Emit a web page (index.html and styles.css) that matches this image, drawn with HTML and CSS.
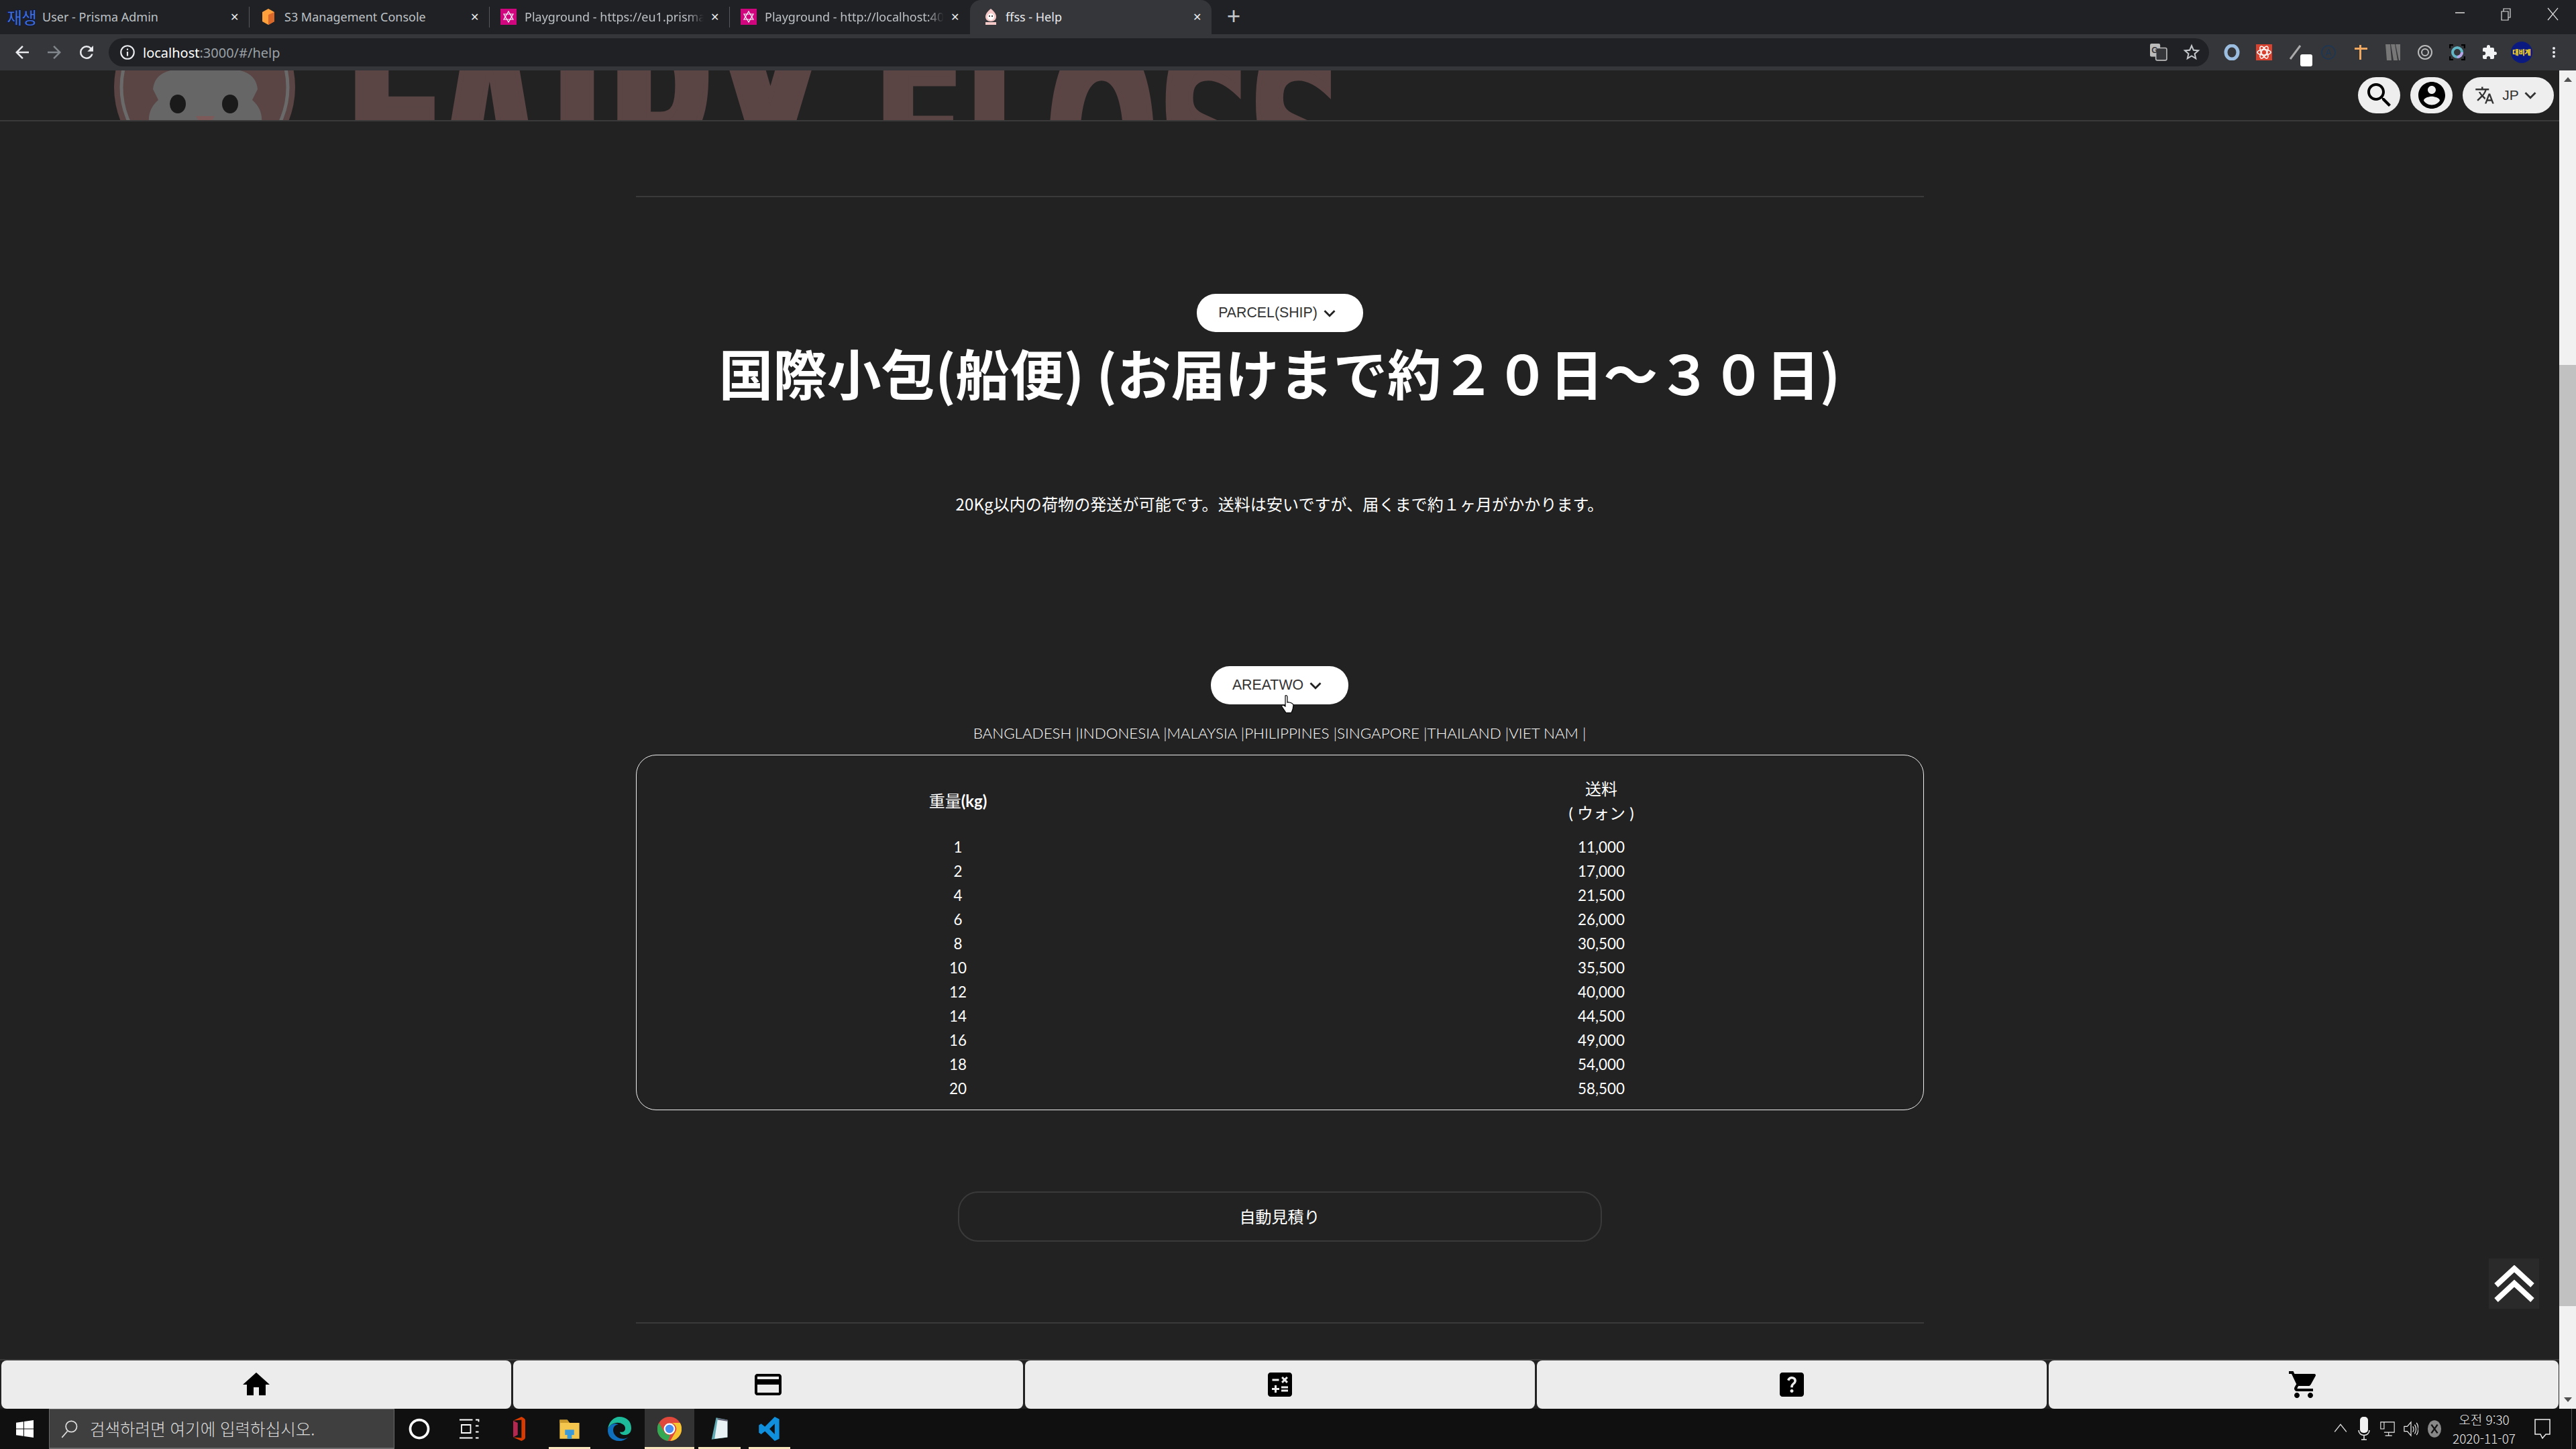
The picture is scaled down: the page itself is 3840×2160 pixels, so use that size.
FILE: index.html
```html
<!DOCTYPE html>
<html lang="ja">
<head>
    <meta charset="UTF-8">
    <title>ffss - Help</title>
    <link rel="stylesheet" href="styles.css">
</head>
<body>

    <!-- browser tabs -->
    <div class="tabbar">
        <div class="tab tab-first">
            <span class="fav-text" lang="ko">재생</span>
            <span class="tab-title">User - Prisma Admin</span>
            <span class="tab-x">✕</span>
        </div>
        <div class="tab">
            <svg class="fav" viewBox="0 0 24 24"><path fill="#ffa03c" d="M12 0 21 5v14l-9 5-9-5V5z"/><path fill="#d9672a" d="M12 9 21 5v14l-9 5z"/></svg>
            <span class="tab-title">S3 Management Console</span>
            <span class="tab-x">✕</span>
        </div>
        <div class="tab">
            <svg class="fav" viewBox="0 0 24 24"><rect width="24" height="24" fill="#d0067f"/><path fill="none" stroke="#fff" stroke-width="1.2" d="M12 4 19 16H5zM12 20 5 8h14z"/></svg>
            <span class="tab-title tab-fade">Playground - https://eu1.prisma</span>
            <span class="tab-x">✕</span>
        </div>
        <div class="tab">
            <svg class="fav" viewBox="0 0 24 24"><rect width="24" height="24" fill="#d0067f"/><path fill="none" stroke="#fff" stroke-width="1.2" d="M12 4 19 16H5zM12 20 5 8h14z"/></svg>
            <span class="tab-title tab-fade">Playground - http://localhost:40</span>
            <span class="tab-x">✕</span>
        </div>
        <div class="tab tab-active">
            <svg class="fav-small" viewBox="0 0 20 24"><path fill="#f6c9c9" d="M10 0c5 4 8 8 8 12s-3 7-8 7-8-3-8-7 3-8 8-12z"/><circle cx="10" cy="12" r="5" fill="#fff"/><circle cx="8" cy="11" r="1"/><circle cx="12" cy="11" r="1"/><rect x="2" y="20" width="16" height="4" fill="#f6c9c9"/></svg>
            <span class="tab-title">ffss - Help</span>
            <span class="tab-x">✕</span>
        </div>
        <span class="tab-new">+</span>
        <div class="win-btns">
            <svg viewBox="0 0 20 20"><path stroke="#ddd" stroke-width="1.5" d="M3 8h14"/></svg>
            <svg viewBox="0 0 20 20"><path fill="none" stroke="#ddd" stroke-width="1.2" d="M3 6h10v13H3zM6 6V2h10v13h-3"/></svg>
            <svg viewBox="0 0 20 20"><path stroke="#ddd" stroke-width="1.2" d="M3 1l15 18M18 1 3 19"/></svg>
        </div>
    </div>

    <!-- address bar -->
    <div class="toolbar">
        <svg class="nav-ico" viewBox="0 0 24 24"><path fill="#e8eaed" d="M20 11H7.83l5.59-5.59L12 4l-8 8 8 8 1.41-1.41L7.83 13H20z"/></svg>
        <svg class="nav-ico" viewBox="0 0 24 24"><path fill="#80868b" d="M4 11h12.17l-5.59-5.59L12 4l8 8-8 8-1.41-1.41L16.17 13H4z"/></svg>
        <svg class="nav-ico" viewBox="0 0 24 24"><path fill="#e8eaed" d="M17.65 6.35A7.96 7.96 0 0 0 12 4a8 8 0 1 0 7.73 10h-2.08A6 6 0 1 1 12 6c1.66 0 3.14.69 4.22 1.78L13 11h7V4z"/></svg>
        <div class="omnibox">
            <svg class="info-ico" viewBox="0 0 24 24"><path fill="#e8eaed" d="M11 7h2v2h-2zm0 4h2v6h-2zm1-9a10 10 0 1 0 0 20 10 10 0 0 0 0-20zm0 18a8 8 0 1 1 0-16 8 8 0 0 1 0 16z"/></svg>
            <span class="url"><b>localhost</b>:3000/#/help</span>
            <svg class="omni-right" viewBox="0 0 24 24"><rect width="14" height="18" rx="2" fill="#bbb"/><rect x="8" y="6" width="15" height="17" rx="2" fill="#35363a" stroke="#bbb" stroke-width="1.5"/><text x="2" y="13" font-family="Liberation Sans" font-size="11" font-weight="700" fill="#35363a">G</text></svg>
            <svg class="omni-star" viewBox="0 0 24 24"><path fill="#c4c7cb" d="M22 9.24l-7.19-.62L12 2 9.19 8.63 2 9.24l5.46 4.73L5.82 21 12 17.27 18.18 21l-1.63-7.03zM12 15.4l-3.76 2.27 1-4.28-3.32-2.88 4.38-.38L12 6.1l1.71 4.04 4.38.38-3.32 2.88 1 4.28z"/></svg>
        </div>
        <div class="ext-row">
            <svg class="ext" viewBox="0 0 24 24"><ellipse cx="12" cy="12" rx="9" ry="10" fill="none" stroke="#9bbde0" stroke-width="5"/></svg>
            <svg class="ext" viewBox="0 0 24 24"><rect width="24" height="24" fill="#d8432f"/><g fill="none" stroke="#fff" stroke-width="1.5"><ellipse cx="12" cy="12" rx="10" ry="4"/><ellipse cx="12" cy="12" rx="10" ry="4" transform="rotate(60 12 12)"/><ellipse cx="12" cy="12" rx="10" ry="4" transform="rotate(120 12 12)"/></g></svg>
            <span class="ext ext-pen"><svg viewBox="0 0 24 24"><path stroke="#aaa" stroke-width="3" d="M3 22 18 2"/></svg><i class="pen-badge"></i></span>
            <svg class="ext" viewBox="0 0 24 24"><circle cx="12" cy="12" r="10" fill="none" stroke="#1c3655" stroke-width="1.5"/><text x="7" y="17" font-family="Liberation Sans" font-size="14" fill="#1c3655">A</text></svg>
            <svg class="ext" viewBox="0 0 24 24"><path fill="#f0a860" d="M10 1h3v4h9v3h-9v15h-3V8H3V5h7z"/></svg>
            <svg class="ext" viewBox="0 0 24 24"><path fill="#777" d="M1 0h7l2 24H3zM9 0h6l4 24h-6zM16 0h7v24h-2z"/></svg>
            <svg class="ext" viewBox="0 0 24 24"><g fill="none" stroke="#bbb" stroke-width="2"><circle cx="12" cy="12" r="10"/><circle cx="12" cy="12" r="5"/></g></svg>
            <svg class="ext" viewBox="0 0 24 24"><path fill="none" stroke="#000" stroke-width="2.5" d="M6 1H1v5M18 1h5v5M6 23H1v-5M18 23h5v-5"/><circle cx="12" cy="12" r="7" fill="none" stroke="#62b5c4" stroke-width="4"/><path fill="none" stroke="#b9a3e8" stroke-width="4" d="M12 19a7 7 0 0 0 7-7"/></svg>
            <svg class="ext" viewBox="0 0 24 24"><path fill="#f1f3f4" d="M20.5 11H19V7a2 2 0 0 0-2-2h-4V3.500a2.500 2.500 0 0 0-5 0V5H4a2 2 0 0 0-2 2v3.800h1.500a2.700 2.700 0 0 1 0 5.400H2V20a2 2 0 0 0 2 2h3.800v-1.500a2.700 2.700 0 0 1 5.400 0V22H17a2 2 0 0 0 2-2v-4h1.500a2.500 2.500 0 0 0 0-5z"/></svg>
            <span class="avatar">대비계</span>
            <svg class="ext ext-menu" viewBox="0 0 24 24"><path fill="#e8eaed" d="M12 8a2 2 0 1 0 0-4 2 2 0 0 0 0 4zm0 2a2 2 0 1 0 0 4 2 2 0 0 0 0-4zm0 6a2 2 0 1 0 0 4 2 2 0 0 0 0-4z"/></svg>
        </div>
    </div>

    <div class="viewport">
        <div class="page">

            <header class="site-header">
                <svg class="logo-bunny" viewBox="0 0 270 270"><circle cx="135" cy="135" r="135" fill="#5a4444"/><circle cx="135" cy="135" r="124" fill="none" stroke="#6a6a6a" stroke-width="5"/><path fill="#666" d="M80 60h100l8 50q24 6 26 28l-8 16q16 14 14 34l-14 22H66l-14-22q-2-20 14-34l-8-16q2-22 26-28z"/><ellipse cx="95" cy="160" rx="12" ry="14" fill="#1a1a1a"/><ellipse cx="173" cy="160" rx="12" ry="14" fill="#1a1a1a"/><path fill="#7c5a5a" d="M122 178h28l-9 16h-10z"/></svg>
                <div class="logo-text">
                    <span class="logo-word1">FAIRY</span>
                    <span class="logo-word2">FLOSS</span>
                </div>
                <div class="header-actions">
                    <button class="round-btn">
                        <svg viewBox="0 0 24 24"><path d="M15.500 14h-.79l-.28-.27C15.410 12.590 16 11.110 16 9.500 16 5.910 13.090 3 9.500 3S3 5.910 3 9.500 5.910 16 9.500 16c1.610 0 3.090-.59 4.230-1.570l.27.28v.79l5 4.990L20.490 19l-4.990-5zm-6 0C7.010 14 5 11.990 5 9.500S7.010 5 9.500 5 14 7.010 14 9.500 11.990 14 9.500 14z"/></svg>
                    </button>
                    <button class="round-btn">
                        <svg viewBox="0 0 24 24"><path d="M12 2C6.480 2 2 6.480 2 12s4.480 10 10 10 10-4.480 10-10S17.520 2 12 2zm0 3c1.660 0 3 1.340 3 3s-1.340 3-3 3-3-1.340-3-3 1.340-3 3-3zm0 14.200c-2.500 0-4.710-1.280-6-3.220.03-1.990 4-3.080 6-3.080 1.990 0 5.970 1.090 6 3.080-1.290 1.940-3.500 3.220-6 3.220z"/></svg>
                    </button>
                    <button class="lang-btn">
                        <svg class="lang-ico" viewBox="0 0 24 24"><path fill="#333" d="M12.870 15.070l-2.540-2.510.03-.03c1.740-1.940 2.980-4.170 3.710-6.530H17V4h-7V2H8v2H1v1.990h11.170C11.500 7.920 10.440 9.750 9 11.350 8.070 10.320 7.300 9.190 6.690 8h-2c.73 1.630 1.730 3.170 2.980 4.560l-5.090 5.020L4 19l5-5 3.110 3.110.76-2.040zM18.500 10h-2L12 22h2l1.120-3h4.750L21 22h2l-4.500-12zm-2.620 7l1.620-4.330L19.120 17h-3.240z"/></svg>
                        <span>JP</span>
                        <svg class="chev" viewBox="0 0 24 24"><path fill="#333" d="M16.590 8.590L12 13.170 7.410 8.590 6 10l6 6 6-6z"/></svg>
                    </button>
                </div>
            </header>

            <main class="content">
                <hr class="rule rule-top">
                <button class="pill-btn">PARCEL(SHIP)
                    <svg viewBox="0 0 24 24"><path fill="#222" d="M16.590 8.590L12 13.170 7.410 8.590 6 10l6 6 6-6z"/></svg>
                </button>
                <h1 class="title">国際小包(船便) (お届けまで約２０日～３０日)</h1>
                <p class="lead">20Kg以内の荷物の発送が可能です。送料は安いですが、届くまで約１ヶ月がかかります。</p>

                <button class="pill-btn pill-area">AREATWO
                    <svg viewBox="0 0 24 24"><path fill="#222" d="M16.590 8.590L12 13.170 7.410 8.590 6 10l6 6 6-6z"/></svg>
                    <svg class="hand-cursor" viewBox="0 0 24 30"><path fill="#fff" stroke="#000" stroke-width="1.200" d="M8 2c1.500-1 3 0 3 2v8l1-.3 2 .3 2 .5 2 1c1 .5 2 1 2 3l-1 6-2 5H9l-6-9c-1-2 1-3 2.500-2L8 18z"/></svg>
                </button>
                <p class="countries">BANGLADESH |INDONESIA |MALAYSIA |PHILIPPINES |SINGAPORE |THAILAND |VIET NAM |</p>

                <div class="table-box">
                    <table class="rate-table">
                        <thead>
                            <tr><th>重量<b>(kg)</b></th><th>送料<br>( ウォン )</th></tr>
                        </thead>
                        <tbody>
                            <tr><td>1</td><td>11,000</td></tr>
                            <tr><td>2</td><td>17,000</td></tr>
                            <tr><td>4</td><td>21,500</td></tr>
                            <tr><td>6</td><td>26,000</td></tr>
                            <tr><td>8</td><td>30,500</td></tr>
                            <tr><td>10</td><td>35,500</td></tr>
                            <tr><td>12</td><td>40,000</td></tr>
                            <tr><td>14</td><td>44,500</td></tr>
                            <tr><td>16</td><td>49,000</td></tr>
                            <tr><td>18</td><td>54,000</td></tr>
                            <tr><td>20</td><td>58,500</td></tr>
                        </tbody>
                    </table>
                </div>

                <button class="estimate-btn">自動見積り</button>
                <hr class="rule rule-bottom">
            </main>

            <button class="to-top">
                <svg viewBox="0 0 60 56"><path fill="none" stroke="#fff" stroke-width="8" stroke-linejoin="miter" d="M3 32 30 7l27 25M3 54 30 29l27 25" transform="translate(0 -2)"/></svg>
            </button>

            <nav class="bottom-nav">
                <button class="nav-btn"><svg viewBox="0 0 24 24"><path d="M10 20v-6h4v6h5v-8h3L12 3 2 12h3v8z"/></svg></button>
                <button class="nav-btn"><svg viewBox="0 0 24 24"><path d="M20 4H4c-1.110 0-1.990.89-1.990 2L2 18c0 1.110.89 2 2 2h16c1.110 0 2-.89 2-2V6c0-1.110-.89-2-2-2zm0 14H4v-6h16v6zm0-10H4V6h16v2z"/></svg></button>
                <button class="nav-btn"><svg viewBox="0 0 24 24"><path d="M19 3H5c-1.100 0-2 .9-2 2v14c0 1.100.9 2 2 2h14c1.100 0 2-.9 2-2V5c0-1.100-.9-2-2-2zm-5.970 4.060L14.090 6l1.410 1.410L16.910 6l1.060 1.060-1.410 1.410 1.410 1.410-1.060 1.060-1.410-1.400-1.410 1.410-1.060-1.060 1.410-1.410-1.410-1.420zm-6.780.66h5v1.500h-5v-1.500zM11.500 16h-2v2H8v-2H6v-1.500h2v-2h1.500v2h2V16zm6.500 1.250h-5v-1.500h5v1.500zm0-2.500h-5v-1.500h5v1.500z"/></svg></button>
                <button class="nav-btn"><svg viewBox="0 0 24 24"><path d="M19 3H5c-1.100 0-2 .9-2 2v14c0 1.100.9 2 2 2h14c1.100 0 2-.9 2-2V5c0-1.100-.9-2-2-2zm-6.990 15c-.7 0-1.260-.56-1.260-1.260 0-.71.56-1.250 1.260-1.250.71 0 1.250.54 1.250 1.250-.01.69-.54 1.260-1.250 1.260zm3.010-7.400c-.76 1.110-1.480 1.460-1.870 2.170-.16.29-.22.48-.22 1.410h-1.820c0-.49-.08-1.290.31-1.980.49-.87 1.420-1.390 1.960-2.160.57-.81.25-2.330-1.370-2.330-1.060 0-1.580.8-1.800 1.480l-1.650-.7C9.010 7.150 10.220 6 11.990 6c1.480 0 2.490.67 3.010 1.520.44.72.7 2.070.02 3.080z"/></svg></button>
                <button class="nav-btn"><svg viewBox="0 0 24 24"><path d="M7 18c-1.100 0-1.990.9-1.990 2S5.900 22 7 22s2-.9 2-2-.9-2-2-2zM1 2v2h2l3.600 7.590-1.350 2.450c-.16.28-.25.61-.25.96 0 1.100.9 2 2 2h12v-2H7.420c-.14 0-.25-.11-.25-.25l.03-.12.9-1.630h7.450c.75 0 1.410-.41 1.750-1.030l3.580-6.470c.08-.14.12-.31.12-.48 0-.55-.45-1-1-1H5.210l-.94-2H1zm16 16c-1.100 0-1.990.9-1.990 2s.89 2 1.990 2 2-.9 2-2-.9-2-2-2z"/></svg></button>
            </nav>
        </div>

        <div class="scrollbar">
            <span class="arrow-up"></span>
            <div class="scroll-track"><div class="scroll-thumb"></div></div>
            <span class="arrow-down"></span>
        </div>
    </div>

    <!-- windows taskbar -->
    <footer class="taskbar">
        <div class="start">
            <svg viewBox="0 0 24 24"><path fill="#fff" d="M0 3.500 10 2v9.500H0zM11 1.800 24 0v11.500H11zM0 12.500h10V22L0 20.500zM11 12.500h13V24l-13-1.800z"/></svg>
        </div>
        <div class="search-box">
            <svg viewBox="0 0 24 24"><circle cx="14" cy="9" r="7" fill="none" stroke="#ddd" stroke-width="1.500"/><path stroke="#ddd" stroke-width="1.500" d="M9 15 2 23"/></svg>
            <span lang="ko">검색하려면 여기에 입력하십시오.</span>
        </div>
        <div class="task-item"><svg viewBox="0 0 24 24"><circle cx="12" cy="12" r="9" fill="none" stroke="#fff" stroke-width="2.500"/></svg></div>
        <div class="task-item"><svg viewBox="0 0 24 24"><path fill="none" stroke="#fff" stroke-width="1.200" d="M2 3h13M2 21h13M4 8h9v8H4zM18 3h3v2M18 9h3M18 15h3M18 21h3"/></svg></div>
        <div class="task-item"><svg viewBox="0 0 32 32"><path fill="#d83b01" d="M8 5 19 0c4 2 5 3 5 5v22c0 2-1 3-5 5L8 27l11 1V4z"/><path fill="#b4274f" d="M8 5v22l6-3V8z"/></svg></div>
        <div class="task-item on"><svg viewBox="0 0 32 32"><path fill="#f4c64d" d="M3 4h10l3 4h13v21H3z"/><path fill="#cb9a2c" d="M3 4h10l3 4H3z"/><path fill="#3a9ad9" d="M10 17h12v7h-3v5h-6v-5h-3z"/></svg></div>
        <div class="task-item"><svg viewBox="0 0 32 32"><path fill="#1ebb9b" d="M16 0c10 0 16 6 16 15 0 6-4 9-9 9-4 0-6-2-6-4 8 2 9-7 4-10C14 5 4 9 1 16 2 7 9 0 16 0z"/><path fill="#0f6fbd" d="M1 16c3-7 10-8 14-6-7 1-8 7-6 12 4 7 12 9 19 5-5 4-8 5-12 5C6 32 0 25 1 16z"/></svg></div>
        <div class="task-item on active"><svg viewBox="0 0 32 32"><circle cx="16" cy="16" r="16" fill="#e0483b"/><path fill="#f7c431" d="M16 8h14a16 16 0 0 1-13 24l7-12a8 8 0 0 0-8-12z"/><path fill="#34a853" d="M2 8l7 12a8 8 0 0 0 8 4l-3 8A16 16 0 0 1 2 8z"/><circle cx="16" cy="16" r="7.500" fill="#fff"/><circle cx="16" cy="16" r="5.500" fill="#4a8cf0"/></svg></div>
        <div class="task-item on"><svg viewBox="0 0 32 32"><path fill="#5fa9b3" d="M12 1 27 4v23L6 30z"/><path fill="#e8f2f4" d="M14 3l13 2v22l-17 2z"/><path stroke="#667" stroke-width="2" d="M14 3l13 2"/></svg></div>
        <div class="task-item on"><svg viewBox="0 0 32 32"><path fill="#0f8fdc" d="M23 0l6 3v26l-6 3L10 19l-5 4-3-2V11l3-2 5 4zm0 9-7 7 7 7z"/></svg></div>

        <div class="tray">
            <svg class="tray-ico" viewBox="0 0 20 24"><path fill="none" stroke="#ddd" stroke-width="1.300" d="M2 16 10 6l8 10"/></svg>
            <svg class="tray-ico" viewBox="0 0 20 36"><rect x="4" width="12" height="24" rx="5" fill="#f2f2f2"/><path fill="none" stroke="#eee" stroke-width="1.500" d="M2 20c0 10 16 10 16 0M10 28v6M6 34h8"/></svg>
            <svg class="tray-ico" viewBox="0 0 26 30"><path fill="none" stroke="#eee" stroke-width="1.300" d="M1 3h6v12H1zM7 3h18v18H7M15 21v6M9 27h12"/></svg>
            <svg class="tray-ico" viewBox="0 0 24 30"><path fill="none" stroke="#eee" stroke-width="1.300" d="M1 11h5l6-7v22l-6-7H1zM15 11c2 3 2 6 0 9M18 8c3 5 3 10 0 15M21 5c4 6 4 14 0 20"/></svg>
            <svg class="tray-ico" viewBox="0 0 24 30"><ellipse cx="12" cy="15" rx="11" ry="14" fill="#888"/><path stroke="#111" stroke-width="2.500" d="M7 8l10 14M17 8 7 22"/></svg>
            <div class="clock" lang="ko"><span>오전 9:30</span><span>2020-11-07</span></div>
            <svg class="notify" viewBox="0 0 24 30"><path fill="none" stroke="#eee" stroke-width="1.500" d="M1 1h22v22h-6l-5 6-3-6H1z"/></svg>
            <i class="show-desktop"></i>
        </div>
    </footer>

</body>
</html>
```

FILE: styles.css
```css
* {
    box-sizing: border-box;
}
html, body {
    margin: 0;
    padding: 0;
    height: 100%;
    overflow: hidden;
}
body {
    width: 3840px;
    height: 2160px;
    display: flex;
    flex-direction: column;
    background-color: #222;
    color: #fff;
    font-family: "Lato", "Noto Sans CJK JP", sans-serif;
}
button {
    border: none;
    cursor: pointer;
    padding: 0;
}

/* browser chrome */
.tabbar {
    height: 51px;
    flex: none;
    display: flex;
    align-items: stretch;
    background-color: #202124;
    font-family: "Noto Sans", "Noto Sans CJK KR", sans-serif;
    font-size: 18px;
    color: #bdc1c6;
}
.tab {
    width: 358px;
    display: flex;
    align-items: center;
    padding: 0 15px 2px 17px;
    position: relative;
}
.tab + .tab::before {
    content: "";
    position: absolute;
    left: 0;
    top: 10px;
    bottom: 10px;
    width: 1px;
    background-color: #55585c;
}
.tab-first {
    width: 371px;
    padding-left: 10px;
}
.tab-title {
    flex: 1;
    white-space: nowrap;
    overflow: hidden;
    margin-left: 12px;
    min-width: 0;
}
.tab-first .tab-title {
    margin-left: 9px;
}
.tab-fade {
    -webkit-mask-image: linear-gradient(to left, transparent 0, #000 24px);
    mask-image: linear-gradient(to left, transparent 0, #000 24px);
}
.tab-x {
    flex: none;
    font-size: 16px;
    color: #e8eaed;
    margin-left: 10px;
}
.fav-text {
    font-family: "Noto Sans CJK KR", sans-serif;
    font-size: 25px;
    font-weight: 700;
    letter-spacing: -1px;
    color: #3f6fe0;
    -webkit-text-stroke: 1px #10183a;
    flex: none;
}
.fav {
    width: 24px;
    height: 24px;
    flex: none;
}
.fav-small {
    width: 20px;
    height: 24px;
    flex: none;
    margin-left: 4px;
}
.tab-active {
    width: 360px;
    margin-left: 1px;
    background-color: #35363a;
    border-radius: 16px 16px 0 0;
    color: #e8eaed;
}
.tab-active::before {
    display: none;
}
.tab-new {
    font-size: 36px;
    line-height: 48px;
    width: 66px;
    text-align: center;
    color: #c4c7cb;
}
.win-btns {
    margin-left: auto;
    display: flex;
    gap: 49px;
    padding: 11px 25px 0 0;
}
.win-btns svg {
    width: 20px;
    height: 20px;
}
.toolbar {
    height: 54px;
    flex: none;
    display: flex;
    align-items: center;
    background-color: #35363a;
    padding: 0 0 0 18px;
}
.nav-ico {
    width: 30px;
    height: 30px;
    margin-right: 18px;
    flex: none;
}
.nav-ico:nth-child(3) {
    margin-right: 0;
}
.omnibox {
    width: 3131px;
    height: 42px;
    margin-left: 18px;
    flex: none;
    border-radius: 21px;
    background-color: #202124;
    display: flex;
    align-items: center;
    padding-left: 15px;
}
.info-ico {
    width: 26px;
    height: 26px;
    margin-right: 10px;
}
.url {
    font-family: "Noto Sans", sans-serif;
    font-size: 20px;
    color: #9aa0a6;
}
.url b {
    font-weight: 400;
    color: #fff;
}
.omni-right {
    margin-left: auto;
    width: 26px;
    height: 26px;
}
.omni-star {
    width: 30px;
    height: 30px;
    margin: 0 11px 0 21px;
}
.ext-row {
    display: flex;
    align-items: center;
    margin-left: 22px;
    gap: 24px;
}
.ext {
    width: 24px;
    height: 24px;
    flex: none;
    display: block;
}
.ext-pen {
    position: relative;
}
.pen-badge {
    position: absolute;
    left: 18px;
    top: 15px;
    width: 18px;
    height: 18px;
    border-radius: 3px;
    background-color: #fff;
}
.avatar {
    width: 32px;
    height: 32px;
    flex: none;
    border-radius: 50%;
    background-color: #0a1a80;
    color: #f5d328;
    font-family: "Noto Sans CJK KR", sans-serif;
    font-size: 10px;
    font-weight: 900;
    line-height: 32px;
    text-align: center;
    overflow: hidden;
    margin: 0 0 0 -4px;
}
.ext-menu {
    margin-left: -4px;
}

/* page */
.viewport {
    flex: none;
    height: 1995px;
    display: flex;
}
.page {
    width: 3815px;
    height: 1995px;
    display: flex;
    flex-direction: column;
    position: relative;
}
.site-header {
    height: 76px;
    flex: none;
    display: flex;
    align-items: center;
    overflow: hidden;
    border-bottom: 2px solid #3a3a3a;
    padding-left: 170px;
    padding-right: 8px;
}
.logo-bunny {
    width: 270px;
    height: 270px;
    flex: none;
    margin-top: -24px;
}
.logo-text {
    display: flex;
    align-items: baseline;
    flex: none;
    margin-left: 72px;
    font-family: "DejaVu Sans", sans-serif;
    font-weight: 700;
    color: #5a4444;
    -webkit-text-stroke: 7px #5a4444;
    line-height: 1;
    transform: translateY(62px) scaleY(2.2);
}
.logo-word1 {
    width: 790px;
    flex: none;
    font-size: 228px;
}
.logo-word2 {
    flex: none;
    font-size: 199px;
}
.header-actions {
    margin-left: auto;
    display: flex;
    align-items: center;
    gap: 15px;
}
.round-btn {
    width: 63px;
    height: 54px;
    border-radius: 27px;
    background-color: #eee;
    display: flex;
    align-items: center;
    justify-content: center;
}
.round-btn svg {
    width: 48px;
    height: 48px;
}
.lang-btn {
    width: 136px;
    height: 54px;
    border-radius: 27px;
    background-color: #eee;
    display: flex;
    align-items: center;
    justify-content: center;
    font-family: "Liberation Sans", sans-serif;
    font-size: 21px;
    color: #333;
}
.lang-ico {
    width: 30px;
    height: 30px;
    margin-right: 11px;
}
.chev {
    width: 34px;
    height: 34px;
}
.content {
    flex: 1;
    min-height: 0;
    overflow: hidden;
    display: flex;
    flex-direction: column;
    align-items: center;
}
.rule {
    width: 1920px;
    height: 2px;
    border: none;
    margin: 0;
    flex: none;
    background-color: #3a3a3a;
}
.rule-top {
    margin-top: 111px;
}
.pill-btn {
    position: relative;
    flex: none;
    margin-top: 144px;
    width: 248px;
    height: 57px;
    border-radius: 28px;
    background-color: #fff;
    color: #333;
    font-family: "Liberation Sans", sans-serif;
    font-size: 21.33px;
    display: flex;
    align-items: center;
    justify-content: center;
}
.pill-btn svg {
    width: 34px;
    height: 34px;
    margin-left: 1px;
}
.title {
    margin: 9px 0 0;
    height: 100px;
    flex: none;
    font-family: "Noto Sans CJK JP", sans-serif;
    font-size: 80.6px;
    line-height: 100px;
    font-weight: 700;
    white-space: nowrap;
}
.lead {
    margin: 129px 0 0;
    flex: none;
    font-family: "Noto Sans CJK JP", sans-serif;
    font-size: 24px;
    line-height: 36px;
    letter-spacing: 0.1px;
}
.pill-area {
    margin-top: 224px;
    width: 205px;
}
.hand-cursor.hand-cursor {
    position: absolute;
    left: 103px;
    top: 42px;
    width: 24px;
    height: 30px;
    margin: 0;
}
.countries {
    margin: 25px 0 0;
    flex: none;
    font-size: 22.4px;
    font-weight: 300;
    line-height: 36px;
}
.table-box {
    width: 1920px;
    height: 530px;
    flex: none;
    margin-top: 14px;
    padding-top: 32px;
    border: 1.5px solid #eee;
    border-radius: 30px;
}
.rate-table {
    width: 100%;
    border-collapse: collapse;
    table-layout: fixed;
    font-family: "Lato", "Noto Sans CJK JP", sans-serif;
    font-size: 22.4px;
    line-height: 36px;
    text-align: center;
}
.rate-table th {
    font-size: 24px;
    font-weight: 400;
    padding: 0 0 15px;
}
.rate-table th b {
    font-weight: 700;
}
.rate-table td {
    padding: 0;
    height: 36px;
    font-weight: 400;
}
.estimate-btn {
    flex: none;
    width: 960px;
    height: 75px;
    margin-top: 121px;
    padding-bottom: 2px;
    background: none;
    border: 2px solid #3a3a3a;
    border-radius: 30px;
    color: #fff;
    font-family: "Noto Sans CJK JP", sans-serif;
    font-size: 24px;
}
.rule-bottom {
    margin-top: 120px;
}
.to-top {
    position: absolute;
    right: 30px;
    bottom: 149px;
    width: 75px;
    height: 75px;
    background-color: #2a2a2a;
    display: flex;
    align-items: center;
    justify-content: center;
}
.to-top svg {
    width: 60px;
    height: 56px;
}
.bottom-nav {
    flex: none;
    height: 74px;
    display: flex;
    gap: 3px;
    border-top: 2px solid #3a3a3a;
    padding: 0 1px 0 2px;
}
.nav-btn {
    flex: 1;
    height: 72px;
    background-color: #ececec;
    border-radius: 8px;
    display: flex;
    align-items: center;
    justify-content: center;
}
.nav-btn svg {
    width: 48px;
    height: 48px;
}
.scrollbar {
    width: 25px;
    flex: none;
    background-color: #f1f1f1;
    display: flex;
    flex-direction: column;
    align-items: center;
}
.arrow-up, .arrow-down {
    flex: none;
    width: 0;
    height: 0;
    border-left: 6px solid transparent;
    border-right: 6px solid transparent;
    margin: 10px 0;
}
.arrow-up {
    border-bottom: 7px solid #505050;
}
.arrow-down {
    border-top: 7px solid #505050;
}
.scroll-track {
    flex: 1;
    width: 100%;
    padding-top: 412px;
    padding-bottom: 126px;
}
.scroll-thumb {
    height: 100%;
    background-color: #c1c1c1;
}

/* windows taskbar */
.taskbar {
    flex: none;
    height: 60px;
    display: flex;
    align-items: stretch;
    background-color: #101010;
    font-family: "Noto Sans CJK KR", sans-serif;
    color: #eee;
}
.start {
    width: 73px;
    flex: none;
    display: flex;
    align-items: center;
    justify-content: center;
}
.start svg {
    width: 26px;
    height: 26px;
}
.search-box {
    width: 515px;
    flex: none;
    background-color: #3f3f3f;
    border: 1px solid #6a6a6a;
    border-bottom-width: 2px;
    display: flex;
    align-items: center;
    padding-left: 16px;
    font-size: 24.5px;
    font-weight: 300;
    color: #ddd;
}
.search-box svg {
    width: 28px;
    height: 28px;
    margin-right: 16px;
}
.task-item {
    width: 74.5px;
    flex: none;
    display: flex;
    align-items: center;
    justify-content: center;
    position: relative;
}
.task-item svg {
    width: 36px;
    height: 36px;
}
.task-item.on::after {
    content: "";
    position: absolute;
    left: 6px;
    right: 6px;
    bottom: 0;
    height: 3px;
    background-color: #f7e6bb;
}
.task-item.active {
    background-color: #333;
}
.task-item.active::after {
    left: 0;
    right: 0;
}
.tray {
    margin-left: auto;
    display: flex;
    align-items: center;
    position: relative;
    padding-right: 38px;
}
.tray-ico {
    width: 22px;
    height: 28px;
    margin-right: 13px;
}
.tray-ico:nth-child(2) {
    height: 36px;
}
.clock {
    display: flex;
    flex-direction: column;
    align-items: center;
    font-size: 19px;
    font-weight: 300;
    line-height: 28px;
    margin: 0 28px 0 3px;
}
.notify {
    width: 24px;
    height: 30px;
}
.show-desktop {
    position: absolute;
    right: 6px;
    top: 0;
    bottom: 0;
    width: 1px;
    background-color: #555;
}
```
